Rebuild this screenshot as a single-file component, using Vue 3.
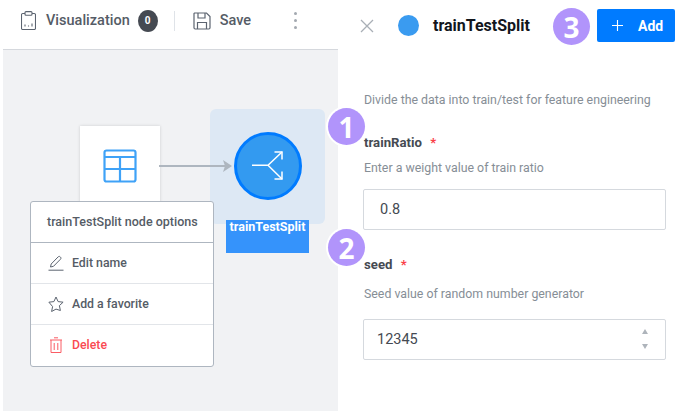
<script setup>
const menuItems = [
  { label: "Edit name", icon: "edit" },
  { label: "Add a favorite", icon: "star" },
  { label: "Delete", icon: "trash", danger: true },
];
</script>

<template>
  <div class="page">
    <div class="left">
      <header class="toolbar">
        <button class="tool first">
          <svg width="15" height="19" viewBox="0 0 15 19" fill="none" stroke="#5c6470" stroke-width="1.100">
            <path d="M4 2.500H1.700A1.200 1.200 0 0 0 .5 3.700v13.600a1.200 1.200 0 0 0 1.200 1.200h11.600a1.200 1.200 0 0 0 1.200-1.200V3.700a1.200 1.200 0 0 0-1.200-1.200H11" />
            <rect x="4" y=".6" width="7" height="3.600" rx="1" />
            <path d="M4 15.500v-2M7.500 15.500v-1M11 15.500v-3" />
          </svg>
          <span>Visualization</span>
          <span class="count">0</span>
        </button>
        <span class="divider"></span>
        <button class="tool">
          <svg width="18" height="18" viewBox="0 0 18 18" fill="none" stroke="#5c6470" stroke-width="1.200">
            <path d="M1.500 1h12L17 4.500V15.800a1.200 1.200 0 0 1-1.200 1.200H2.200A1.200 1.200 0 0 1 1 15.800V1.500z" />
            <path d="M5 1v5h7V1M4.500 17v-6.500h9V17" />
          </svg>
          <span>Save</span>
        </button>
        <span class="dots"><i></i><i></i><i></i></span>
      </header>

      <main class="canvas">
        <div class="source-node">
          <svg width="34" height="34" viewBox="0 0 34 34" fill="none" stroke="#3fa2f7" stroke-width="2.200">
            <rect x="1.500" y="1.500" width="31" height="31" rx="2" />
            <path d="M1.500 8h31M1.500 20h31M17 8v24.500" />
          </svg>
        </div>
        <div class="split-node">
          <div class="split-circle">
            <svg width="34" height="31" viewBox="0 0 34 31" fill="none" stroke="#fff" stroke-width="1.500">
              <path d="M1 15.300h16L31 2M17 15.300L31 29" />
              <path d="M23.500 2H31v7.500M23.500 29H31v-7.500" />
            </svg>
          </div>
        </div>
        <svg class="edge" width="74" height="16" viewBox="0 0 74 16">
          <path d="M0 8h66" stroke="#aeb6bf" stroke-width="2" />
          <path d="M64 2l9 6-9 6 2-6z" fill="#aeb6bf" />
        </svg>
        <div class="split-label">trainTestSplit</div>

        <div class="menu">
          <div class="menu-title">trainTestSplit node options</div>
          <div
            v-for="item in menuItems"
            :key="item.label"
            class="menu-item"
            :class="{ danger: item.danger }"
          >
            <svg v-if="item.icon === 'edit'" width="16" height="16" viewBox="0 0 16 16" fill="none" stroke="#5c6470" stroke-width="1">
              <path d="M2.500 12l.7-3L10 2c.8-.8 1.700-.8 2.400 0 .7.700.7 1.600 0 2.300L5.500 11.300z" />
              <path d="M0.500 15.200h15" />
            </svg>
            <svg v-else-if="item.icon === 'star'" width="16" height="16" viewBox="0 0 16 16" fill="none" stroke="#5c6470" stroke-width="1">
              <path d="M8 1l2.100 4.600 5 .6-3.700 3.400 1 4.900L8 13.100l-4.400 2.400 1-4.900L.9 6.200l5-.6z" />
            </svg>
            <svg v-else width="16" height="16" viewBox="0 0 16 16" fill="none" stroke="#fa5c64" stroke-width="1">
              <path d="M2 3h12M6 .8h4M3 3v12.500h10V3M6.200 6v7M9.800 6v7" />
            </svg>
            <span>{{ item.label }}</span>
          </div>
        </div>
      </main>
    </div>

    <aside class="panel">
      <header class="panel-head">
        <svg class="close" width="14" height="14" viewBox="0 0 14 14" stroke="#a9afb6" stroke-width="1.300">
          <path d="M1 1l12 12M13 1L1 13" />
        </svg>
        <span class="dot"></span>
        <h1>trainTestSplit</h1>
        <button class="add">
          <svg width="11" height="11" viewBox="0 0 11 11" stroke="#fff" stroke-width="1.100">
            <path d="M5.500 0v11M0 5.500h11" />
          </svg>
          <span>Add</span>
        </button>
      </header>

      <div class="panel-body">
        <p class="intro">Divide the data into train/test for feature engineering</p>

        <div class="field ratio">
          <label>trainRatio <em>*</em></label>
          <p>Enter a weight value of train ratio</p>
          <div class="input ratio-input">0.8</div>
        </div>

        <div class="field seed">
          <label>seed <em>*</em></label>
          <p>Seed value of random number generator</p>
          <div class="input">
            12345
            <span class="spin"><i class="up"></i><i class="down"></i></span>
          </div>
        </div>
      </div>
    </aside>

    <span class="step step1">1</span>
    <span class="step step2">2</span>
    <span class="step step3">3</span>
  </div>
</template>

<style scoped>
.page {
  position: relative;
  display: flex;
  width: 687px;
  height: 414px;
  padding: 0 0 3px 3px;
  box-sizing: border-box;
  overflow: hidden;
  background: #fff;
  font-family: Roboto, "Liberation Sans", sans-serif;
}

.left {
  display: flex;
  flex-direction: column;
  width: 335px;
}

.toolbar {
  display: flex;
  align-items: center;
  height: 50px;
  box-sizing: border-box;
  padding: 0 0 8px 18px;
  border-bottom: 1px solid #d5d8dd;
}

.tool {
  display: flex;
  align-items: center;
  gap: 9px;
  padding: 0;
  border: 0;
  background: none;
  font: 500 14.500px Roboto, sans-serif;
  color: #555c66;
}

.first {
  gap: 10px;
}

.first .count {
  margin-left: -2px;
}

.count {
  width: 20px;
  height: 22px;
  border-radius: 50%;
  background: #454a52;
  color: #fff;
  font-size: 10px;
  font-weight: 700;
  line-height: 22px;
  text-align: center;
}

.divider {
  width: 1px;
  height: 20px;
  margin: 0 18px 0 16px;
  background: #dfe3e8;
}

.dots {
  display: flex;
  flex-direction: column;
  gap: 4px;
  margin-left: 43px;
}

.dots i {
  width: 3px;
  height: 3px;
  border-radius: 50%;
  background: #a3a9b0;
}

.canvas {
  position: relative;
  flex: 1;
  background: #f1f2f4;
}

.source-node {
  position: absolute;
  left: 77px;
  top: 76px;
  display: flex;
  justify-content: center;
  width: 80px;
  height: 80px;
  padding-top: 23px;
  box-sizing: border-box;
  background: #fff;
  box-shadow: 0 0 3px rgba(0, 0, 0, 0.15);
}

.edge {
  position: absolute;
  left: 156px;
  top: 108px;
}

.split-node {
  position: absolute;
  left: 207px;
  top: 59px;
  display: flex;
  align-items: center;
  justify-content: center;
  width: 115px;
  height: 115px;
  border-radius: 6px;
  background: #dde8f4;
}

.split-circle {
  display: flex;
  align-items: center;
  justify-content: center;
  width: 68px;
  height: 68px;
  margin-bottom: 2px;
  box-sizing: border-box;
  border: 3px solid #007bff;
  border-radius: 50%;
  background: #339af0;
}

.split-label {
  position: absolute;
  left: 223px;
  top: 170px;
  width: 83px;
  height: 33px;
  background: #3593fb;
  color: #fff;
  font-size: 12.500px;
  font-weight: 700;
  text-align: center;
  line-height: 13px;
}

.menu {
  position: absolute;
  left: 27px;
  top: 151px;
  width: 184px;
  box-sizing: border-box;
  border: 1px solid #aeb6c0;
  border-radius: 3px;
  background: #fff;
}

.menu-title {
  height: 41px;
  border-bottom: 1px solid #aeb6c0;
  box-sizing: border-box;
  padding-left: 16px;
  color: #555c66;
  font-size: 12.500px;
  font-weight: 500;
  line-height: 39px;
}

.menu-item {
  display: flex;
  align-items: center;
  gap: 8px;
  height: 41px;
  box-sizing: border-box;
  padding: 0 0 0 17px;
  border-bottom: 1px solid #e2e5e9;
  color: #555c66;
  font-size: 12.300px;
  font-weight: 500;
}

.menu-item:last-child {
  padding-bottom: 2px;
  border-bottom: 0;
}

.danger {
  color: #fa4a52;
}

.panel {
  flex: 1;
}

.panel-head {
  display: flex;
  align-items: center;
  height: 52px;
  box-sizing: border-box;
  padding: 0 12px 1px 22px;
}

.close {
  margin-right: 24px;
}

.dot {
  width: 21px;
  height: 21px;
  margin-right: 14px;
  border-radius: 50%;
  background: #3a9bf0;
}

h1 {
  flex: 1;
  margin: 0;
  color: #12161c;
  font-size: 16px;
  font-weight: 700;
}

.add {
  display: flex;
  align-items: center;
  gap: 15px;
  width: 78px;
  height: 33px;
  box-sizing: border-box;
  padding: 0 0 0 15px;
  border: 0;
  border-radius: 2px;
  background: #007bff;
  color: #fff;
  font: 700 14px Roboto, sans-serif;
}

.panel-body {
  padding: 40px 21px 0 25px;
}

.intro,
.field p {
  margin: 0;
  padding-left: 1px;
  color: #868e96;
  font-size: 12.350px;
  line-height: 16px;
}

.field {
  display: flex;
  flex-direction: column;
}

.field label {
  padding-left: 1px;
  color: #454a52;
  font-size: 13.200px;
  font-weight: 700;
  line-height: 16px;
}

.field em {
  margin-left: 5px;
  color: #fa3e48;
  font-style: normal;
}

.ratio {
  margin-top: 27px;
}

.ratio p {
  margin-top: 9px;
}

.seed {
  margin-top: 27px;
}

.seed p {
  margin-top: 13px;
}

.input {
  position: relative;
  display: flex;
  align-items: center;
  height: 41px;
  margin-top: 13px;
  box-sizing: border-box;
  padding-left: 13px;
  border: 1px solid #d5d9de;
  border-radius: 2px;
  color: #454a52;
  font-size: 14.500px;
}

.ratio-input {
  padding-left: 16px;
}

.seed .input {
  margin-top: 17px;
}

.spin {
  position: absolute;
  right: 17px;
  top: 9px;
  display: flex;
  flex-direction: column;
  gap: 10px;
}

.spin i {
  width: 0;
  height: 0;
  border-left: 3.500px solid transparent;
  border-right: 3.500px solid transparent;
}

.up {
  border-bottom: 5px solid #aeb4bb;
}

.down {
  border-top: 5px solid #aeb4bb;
}

.step {
  position: absolute;
  display: flex;
  align-items: center;
  justify-content: center;
  width: 37px;
  height: 37px;
  border-radius: 50%;
  background: #b194fb;
  box-shadow: 0 0 0 2px #fff;
  color: #fff;
  font: 700 28px "Open Sans", sans-serif;
}

.step1 {
  left: 328px;
  top: 108px;
}

.step2 {
  left: 328px;
  top: 229px;
}

.step3 {
  left: 553px;
  top: 8px;
}
</style>
